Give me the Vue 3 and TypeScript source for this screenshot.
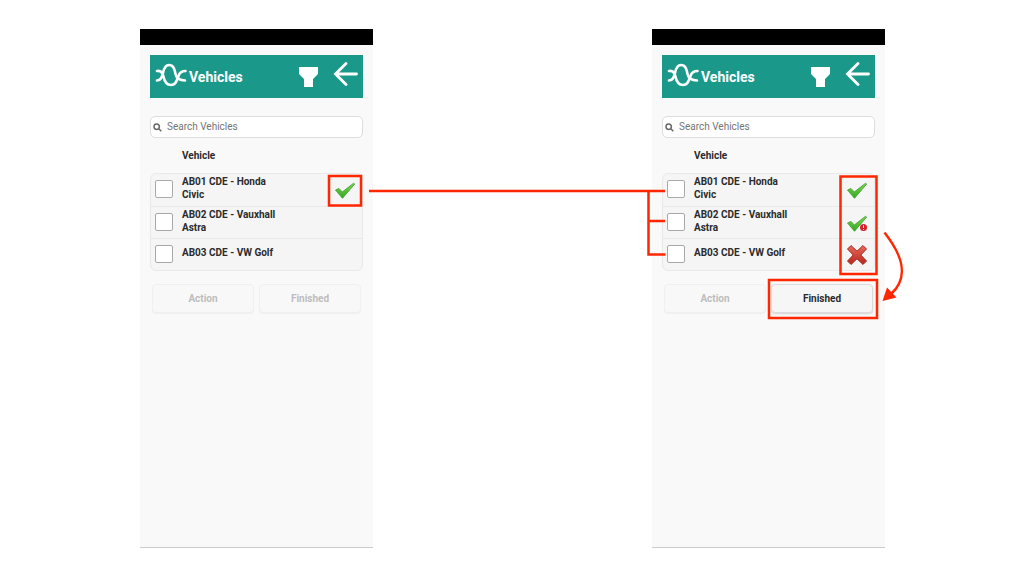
<script setup lang="ts">
type Status = 'none' | 'ok' | 'warn' | 'fail'

interface Vehicle {
  name: string
  status: Status
}

interface Screen {
  id: string
  canFinish: boolean
  vehicles: Vehicle[]
}

const screens: Screen[] = [
  {
    id: 'before',
    canFinish: false,
    vehicles: [
      { name: 'AB01 CDE - Honda Civic', status: 'ok' },
      { name: 'AB02 CDE - Vauxhall Astra', status: 'none' },
      { name: 'AB03 CDE - VW Golf', status: 'none' },
    ],
  },
  {
    id: 'after',
    canFinish: true,
    vehicles: [
      { name: 'AB01 CDE - Honda Civic', status: 'ok' },
      { name: 'AB02 CDE - Vauxhall Astra', status: 'warn' },
      { name: 'AB03 CDE - VW Golf', status: 'fail' },
    ],
  },
]
</script>

<template>
  <main class="stage">
    <svg class="defs" width="0" height="0" aria-hidden="true">
      <defs>
        <linearGradient id="green" x1="0" y1="0" x2="0" y2="1">
          <stop offset="0" stop-color="#7fdc50" />
          <stop offset="1" stop-color="#2fa51f" />
        </linearGradient>
        <linearGradient id="red" x1="0" y1="0" x2="0" y2="1">
          <stop offset="0" stop-color="#ea6a5c" />
          <stop offset="1" stop-color="#b8241c" />
        </linearGradient>
      </defs>
    </svg>

    <section v-for="screen in screens" :key="screen.id" class="phone">
      <div class="status-bar"></div>
      <div class="content">
        <header class="top">
          <svg class="logo" viewBox="0 0 32 24" aria-hidden="true">
            <path d="M2 17.500C6 17.500 7 14 8 10C9 5 10.500 2 14 2C18.500 2 19.500 6 20.500 11C21.500 15.500 24 17.500 30 17.500" />
            <path d="M2 8C5.500 7.500 7.500 9 8.300 13C9.300 18 11.500 22 16 22C20.500 22 22 18 23.500 13C24.700 9 27 8 30.500 8" />
          </svg>
          <h1 class="title">Vehicles</h1>
          <button class="icon-button" type="button" aria-label="Filter">
            <svg class="filter" viewBox="0 0 19 20" aria-hidden="true">
              <path d="M0 0H19V7L14 12V20H5V12L0 7Z" />
            </svg>
          </button>
          <button class="icon-button back-button" type="button" aria-label="Back">
            <svg class="back" viewBox="0 0 25 24" aria-hidden="true">
              <path d="M13 1.500L2.500 12L13 22.500M2.500 12H23.500" />
            </svg>
          </button>
        </header>

        <label class="search">
          <svg class="lens" viewBox="0 0 9 9" aria-hidden="true">
            <circle cx="3.700" cy="3.700" r="2.700" />
            <path d="M5.800 5.800L8.300 8.300" />
          </svg>
          <input type="search" placeholder="Search Vehicles" aria-label="Search Vehicles" />
        </label>

        <h2 class="column-title">Vehicle</h2>

        <ul class="list">
          <li v-for="(vehicle, i) in screen.vehicles" :key="vehicle.name" class="row">
            <input :id="`${screen.id}-${i}`" class="tick" type="checkbox" />
            <label class="name" :for="`${screen.id}-${i}`">{{ vehicle.name }}</label>
            <svg
              v-if="vehicle.status === 'ok' || vehicle.status === 'warn'"
              class="mark"
              viewBox="0 0 22 22"
              aria-hidden="true"
            >
              <path
                d="M1.500 11L5 9.500L8.300 13L19.500 4.300L20.700 5L8.500 19.300Z"
                fill="url(#green)"
                stroke="#399b2c"
                stroke-width="0.8"
                stroke-linejoin="round"
              />
              <g v-if="vehicle.status === 'warn'">
                <circle cx="17.500" cy="15.500" r="3.500" fill="#d6202c" />
                <path d="M17.500 13.300V15.900M17.500 17V17.900" stroke="#fff" stroke-width="1" />
              </g>
            </svg>
            <svg v-else-if="vehicle.status === 'fail'" class="mark" viewBox="0 0 22 22" aria-hidden="true">
              <path
                d="M5 1.500L11 7.200L17 1.500L20.500 5L14.800 11L20.500 17L17 20.500L11 14.800L5 20.500L1.500 17L7.200 11L1.500 5Z"
                fill="url(#red)"
                stroke="#a32a22"
                stroke-width="1"
                stroke-linejoin="round"
              />
            </svg>
          </li>
        </ul>

        <div class="actions">
          <button class="action" type="button" disabled>Action</button>
          <button class="action" type="button" :disabled="!screen.canFinish">Finished</button>
        </div>
      </div>
    </section>

    <svg class="notes" viewBox="0 0 1024 576" preserveAspectRatio="none" aria-hidden="true">
      <rect x="329" y="176" width="32" height="29.500" />
      <path d="M369 191H665M648.500 190V254.500H665.500M648.500 221H665" />
      <rect x="840.500" y="176.500" width="36" height="97.500" />
      <rect x="769" y="280" width="108" height="38" />
      <path class="curve" d="M884.500 232.500C899 251 912 275 891 294" />
      <path class="head" d="M882.500 301L887 287.500L896.500 297.500Z" />
    </svg>
  </main>
</template>

<style>
body {
  margin: 0;
  background: #fff;
}
</style>

<style scoped>
.stage {
  position: relative;
  box-sizing: border-box;
  display: grid;
  grid-template-columns: 1fr 1fr;
  column-gap: 279px;
  min-height: 576px;
  padding: 29px 139px 28px 140px;
  font-family: Roboto, "Liberation Sans", sans-serif;
  color: #2b2b2b;
}

.defs {
  position: absolute;
}

.phone {
  display: flex;
  flex-direction: column;
  background: #f9f9f9;
  border-bottom: 1px solid #cbcbcb;
}

.status-bar {
  height: 16px;
  background: #000;
}

.content {
  padding: 10px 10px 0;
}

.top {
  display: flex;
  align-items: center;
  box-sizing: border-box;
  height: 43px;
  padding: 0 5px;
  background: #1a998a;
}

.logo {
  width: 32px;
  height: 24px;
  margin-bottom: 4px;
  fill: none;
  stroke: #fff;
  stroke-width: 2.6;
  stroke-linecap: round;
}

.title {
  flex: 1;
  margin: 0 0 0 2px;
  font-size: 14px;
  line-height: 16px;
  font-weight: 700;
  color: #fff;
}

.icon-button {
  display: flex;
  padding: 0;
  border: 0;
  background: none;
}

.filter {
  width: 19px;
  height: 20px;
  fill: #fff;
}

.back-button {
  margin: 0 0 6px 15px;
}

.back {
  width: 25px;
  height: 24px;
  fill: none;
  stroke: #fff;
  stroke-width: 2.8;
  stroke-linecap: round;
}

.search {
  display: flex;
  align-items: center;
  gap: 5px;
  box-sizing: border-box;
  height: 22px;
  margin-top: 18px;
  padding: 0 4px 0 2px;
  border: 1px solid #dedede;
  border-radius: 5px;
  background: #fff;
}

.lens {
  flex: none;
  width: 9px;
  height: 9px;
  fill: none;
  stroke: #666;
  stroke-width: 1.5;
}

.search input {
  flex: 1;
  min-width: 0;
  padding: 0;
  border: 0;
  outline: 0;
  background: none;
  font: 400 10px/14px Roboto, "Liberation Sans", sans-serif;
  color: #333;
}

.search input::placeholder {
  color: #757575;
}

.column-title {
  margin: 11px 0 0 32px;
  font-size: 10px;
  line-height: 13px;
  font-weight: 700;
}

.list {
  margin: 11px 0 0;
  padding: 0;
  list-style: none;
  border: 1px solid #e9e9e9;
  border-radius: 6px;
  background: #f5f5f5;
}

.row {
  display: flex;
  align-items: center;
  box-sizing: border-box;
  height: 32px;
  padding: 0 6px 0 4px;
}

.row + .row {
  border-top: 1px solid #e9e9e9;
}

.tick {
  appearance: none;
  flex: none;
  box-sizing: border-box;
  width: 18px;
  height: 18px;
  margin: 0 0 2px;
  border: 1px solid #a9a9a9;
  border-radius: 2px;
  background: #fff;
}

.name {
  width: 100px;
  margin: 0 auto 4px 9px;
  font-size: 10px;
  line-height: 13px;
  font-weight: 700;
}

.mark {
  flex: none;
  width: 22px;
  height: 22px;
}

.actions {
  display: grid;
  grid-template-columns: 1fr 1fr;
  gap: 5px;
  padding: 13px 2px 0;
}

.action {
  height: 29px;
  padding: 0;
  border: 1px solid #dcdcdc;
  border-radius: 4px;
  background: #f6f6f6;
  box-shadow: 0 1px 2px rgba(0, 0, 0, 0.15);
  font: 700 10px/13px Roboto, "Liberation Sans", sans-serif;
  color: #2b2b2b;
}

.action:disabled {
  border-color: #f0f0f0;
  background: #f8f8f8;
  box-shadow: 0 1px 1px rgba(0, 0, 0, 0.04);
  color: #bdbdbd;
}

.notes {
  position: absolute;
  top: 0;
  left: 0;
  width: 100%;
  height: 576px;
  fill: none;
  stroke: #ff2600;
  stroke-width: 2.5;
  pointer-events: none;
}

.head {
  fill: #ff2600;
  stroke: none;
}
</style>
